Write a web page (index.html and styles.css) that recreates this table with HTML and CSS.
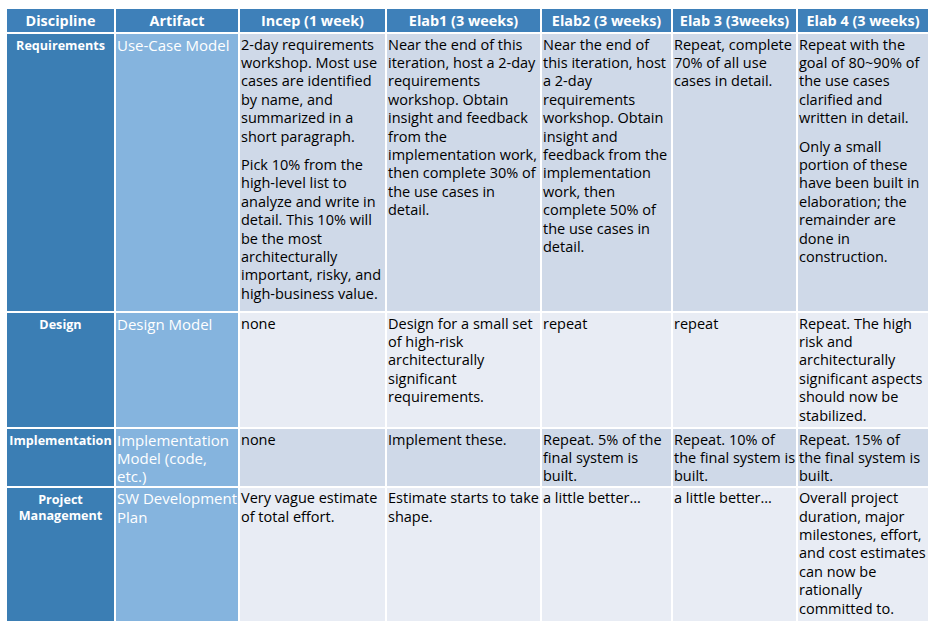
FILE: index.html
```html
<!DOCTYPE html>
<html lang="en">
<head>
<meta charset="utf-8">
<title>Iteration plan</title>
<link rel="stylesheet" href="styles.css">
</head>
<body>
<table class="plan">
  <thead>
    <tr class="head-row">
      <th class="c-disc">Discipline</th>
      <th class="c-art">Artifact</th>
      <th class="c-incep">Incep (1 week)</th>
      <th class="c-e1">Elab1 (3 weeks)</th>
      <th class="c-e2">Elab2 (3 weeks)</th>
      <th class="c-e3">Elab 3 (3weeks)</th>
      <th class="c-e4">Elab 4 (3 weeks)</th>
    </tr>
  </thead>
  <tbody>
    <tr class="row-a r-req">
      <th class="disc">Requirements</th>
      <td class="art">Use-Case Model</td>
      <td><p>2-day requirements workshop. Most use cases are identified by name, and summarized in a short paragraph.</p><p>Pick 10% from the high-level list to analyze and write in detail. This 10% will be the most architecturally important, risky, and high-business value.</p></td>
      <td><p>Near the end of this iteration, host a 2-day requirements workshop. Obtain insight and feedback from the implementation work, then complete 30% of the use cases in detail.</p></td>
      <td><p>Near the end of this iteration, host a 2-day requirements workshop. Obtain insight and feedback from the implementation work, then complete 50% of the use cases in detail.</p></td>
      <td><p>Repeat, complete 70% of all use cases in detail.</p></td>
      <td><p>Repeat with the goal of 80~90% of the use cases clarified and written in detail.</p><p>Only a small portion of these have been built in elaboration; the remainder are done in construction.</p></td>
    </tr>
    <tr class="row-b r-design">
      <th class="disc">Design</th>
      <td class="art">Design Model</td>
      <td><p>none</p></td>
      <td><p>Design for a small set of high-risk architecturally significant requirements.</p></td>
      <td><p>repeat</p></td>
      <td><p>repeat</p></td>
      <td><p>Repeat. The high risk and architecturally significant aspects should now be stabilized.</p></td>
    </tr>
    <tr class="row-a r-impl">
      <th class="disc">Implementation</th>
      <td class="art">Implementation Model (code, etc.)</td>
      <td><p>none</p></td>
      <td><p>Implement these.</p></td>
      <td><p>Repeat. 5% of the final system is built.</p></td>
      <td><p>Repeat. 10% of the final system is built.</p></td>
      <td><p>Repeat. 15% of<br>the final system is built.</p></td>
    </tr>
    <tr class="row-b r-pm">
      <th class="disc">Project Management</th>
      <td class="art">SW Development Plan</td>
      <td><p>Very vague estimate of total effort.</p></td>
      <td><p>Estimate starts to take shape.</p></td>
      <td><p>a little better...</p></td>
      <td><p>a little better...</p></td>
      <td><p>Overall project duration, major milestones, effort, and cost estimates can now be rationally committed to.</p></td>
    </tr>
  </tbody>
</table>
</body>
</html>
```
FILE: styles.css
```css
html, body {
  margin: 0;
  padding: 0;
  background: #ffffff;
}

body {
  padding: 7px 0 0 5px;
  font-family: "Open Sans", "Noto Sans", "Noto Sans CJK KR", sans-serif;
  color: #000000;
}

.plan {
  border-collapse: separate;
  border-spacing: 2px;
  table-layout: fixed;
  width: 925px;
}

.plan th,
.plan td {
  box-sizing: border-box;
  padding: 1.5px 0 0 1px;
  vertical-align: top;
  font-size: 14.5px;
  line-height: 18.4px;
  text-align: left;
}

.plan p {
  margin: 0 0 10px 0;
}

.plan p:last-child {
  margin-bottom: 0;
}

/* column widths */
.c-disc { width: 107px; }
.c-art { width: 122px; }
.c-incep { width: 145px; }
.c-e1 { width: 153px; }
.c-e2 { width: 129px; }
.c-e3 { width: 123px; }
.c-e4 { width: 130px; }

/* header */
.head-row th {
  height: 23px;
  padding: 0;
  background: #3e80b9;
  color: #ffffff;
  font-weight: 700;
  font-size: 14.4px;
  line-height: 18px;
  text-align: center;
  vertical-align: middle;
}

/* discipline column */
.plan th.disc {
  background: #3b7eb4;
  color: #ffffff;
  font-weight: 700;
  font-size: 12.6px;
  line-height: 16.5px;
  text-align: center;
  padding: 4px 0 0 0;
}

/* artifact column */
.plan td.art {
  background: #85b4de;
  color: #ffffff;
  font-size: 15px;
}

.row-a td { background: #cfd9e8; }
.row-b td { background: #e8ecf4; }

.r-req { height: 277px; }
.r-design { height: 114px; }
.r-impl { height: 56px; }
.r-pm { height: 133px; }
```
